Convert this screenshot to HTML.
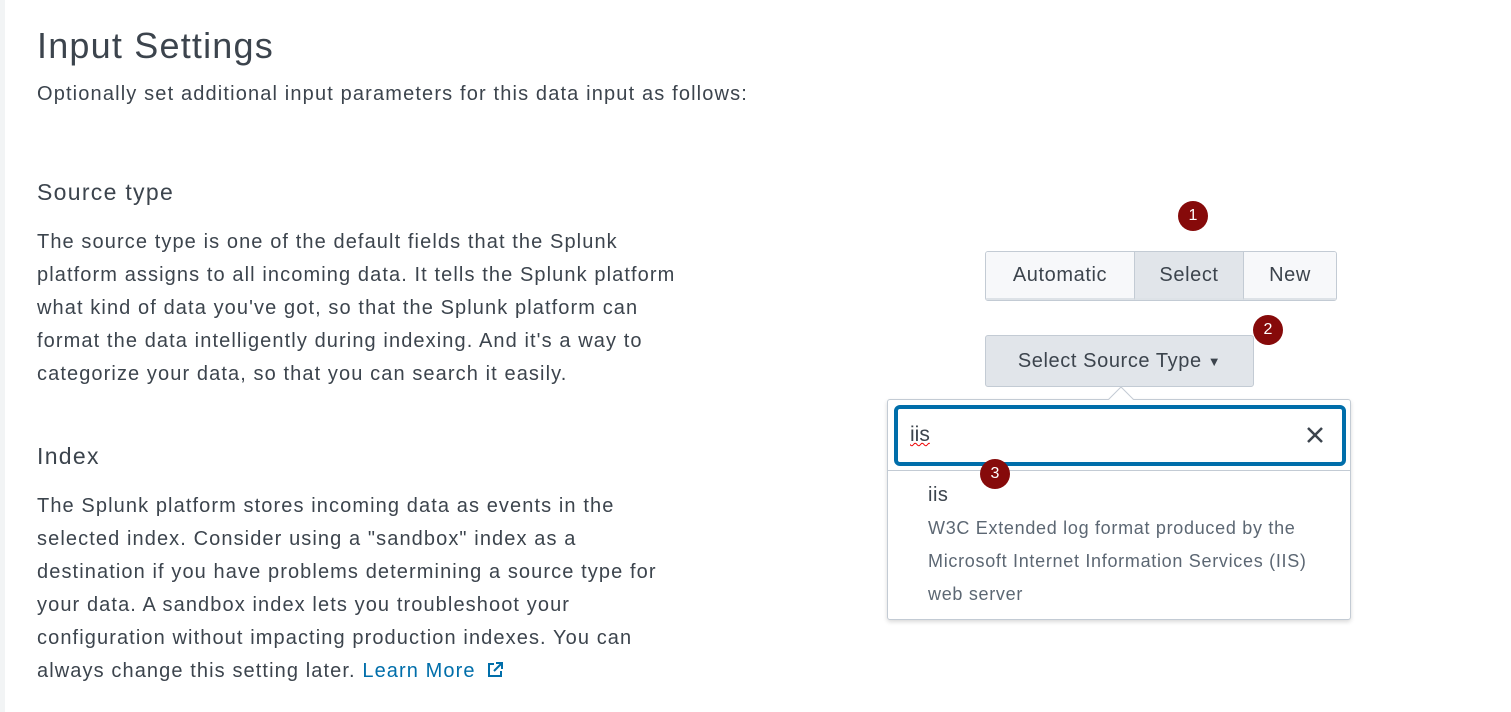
<!DOCTYPE html>
<html><head><style>
*{margin:0;padding:0;box-sizing:border-box}
body{width:1511px;height:712px;background:#fff;font-family:"Liberation Sans",sans-serif;color:#3c444d;position:relative;overflow:hidden}
.strip{position:absolute;left:0;top:0;width:5px;height:712px;background:#f2f4f5}
.abs{position:absolute;white-space:nowrap}
h1{position:absolute;left:37px;top:25px;font-size:36px;font-weight:normal;color:#3c444d;letter-spacing:1.2px}
.p{font-size:20px;line-height:33px;letter-spacing:1.1px}
h2{position:absolute;font-size:23px;font-weight:normal;left:37px;letter-spacing:1.3px}
.grp{position:absolute;left:985px;top:251px;height:50px;display:flex;border:1px solid #c3cbd4;border-radius:3px;overflow:hidden;font-size:20px;letter-spacing:0.6px}
.grp div{display:flex;align-items:center;justify-content:center;background:#f7f8fa;border-bottom:2px solid #dde2e7}
.badge{position:absolute;width:30px;height:30px;border-radius:50%;background:#860a0a;color:#fff;font-size:16px;display:flex;align-items:center;justify-content:center}
</style></head><body>
<div class="strip"></div>
<h1>Input Settings</h1>
<div class="abs" style="left:37px;top:83px;font-size:20px;letter-spacing:1.15px">Optionally set additional input parameters for this data input as follows:</div>
<h2 style="top:179px">Source type</h2>
<div class="abs p" style="left:37px;top:226px">The source type is one of the default fields that the Splunk<br>platform assigns to all incoming data. It tells the Splunk platform<br>what kind of data you've got, so that the Splunk platform can<br>format the data intelligently during indexing. And it's a way to<br>categorize your data, so that you can search it easily.</div>
<h2 style="top:443px">Index</h2>
<div class="abs p" style="left:37px;top:490px">The Splunk platform stores incoming data as events in the<br>selected index. Consider using a "sandbox" index as a<br>destination if you have problems determining a source type for<br>your data. A sandbox index lets you troubleshoot your<br>configuration without impacting production indexes. You can<br>always change this setting later. <span style="color:#006eaa">Learn More <svg width="18" height="18" viewBox="0 0 18 18" style="vertical-align:-2px;margin-left:4px"><path d="M8 3H3v12h12v-5M10 2h6v6M16 2L8 10" fill="none" stroke="#006eaa" stroke-width="2"/></svg></span></div>

<div class="badge" style="left:1178px;top:201px">1</div>
<div class="grp">
<div style="width:148px">Automatic</div>
<div style="width:110px;background:#e1e5ea;border-left:1px solid #c3cbd4;border-right:1px solid #c3cbd4">Select</div>
<div style="width:92px">New</div>
</div>
<div class="badge" style="left:1253px;top:315px">2</div>
<div class="abs" style="left:985px;top:335px;width:269px;height:52px;background:#e1e5ea;border:1px solid #c3cbd4;border-radius:3px;font-size:20px;letter-spacing:0.6px;display:flex;align-items:center;justify-content:center">Select Source Type <span style="font-size:13px;margin-left:6px">&#9660;</span></div>
<div class="abs" style="left:887px;top:399px;width:464px;height:221px;border:1px solid #c3cbd4;border-radius:3px;background:#fff;box-shadow:0 2px 4px rgba(0,0,0,.15)"></div>
<div class="abs" style="left:1112px;top:390px;width:18px;height:18px;background:#fff;border-left:1px solid #c3cbd4;border-top:1px solid #c3cbd4;transform:rotate(45deg)"></div>
<div class="abs" style="left:894px;top:405px;width:452px;height:61px;border:4px solid #006eaa;border-radius:6px;background:#fff"></div>
<div class="abs" style="left:910px;top:423px;font-size:21px;text-decoration:underline wavy #e00;text-decoration-thickness:1px">iis</div>
<svg class="abs" style="left:1305px;top:425px" width="20" height="20" viewBox="0 0 20 20"><path d="M3 3L17 17M17 3L3 17" stroke="#3c444d" stroke-width="2.5"/></svg>
<div class="abs" style="left:888px;top:470px;width:462px;height:1px;background:#c3cbd4"></div>
<div class="badge" style="left:980px;top:459px">3</div>
<div class="abs" style="left:928px;top:484px;font-size:20px;letter-spacing:0.5px">iis</div>
<div class="abs" style="left:928px;top:512px;font-size:18px;line-height:33px;color:#5c6773;letter-spacing:0.7px">W3C Extended log format produced by the<br>Microsoft Internet Information Services (IIS)<br>web server</div>
</body></html>
